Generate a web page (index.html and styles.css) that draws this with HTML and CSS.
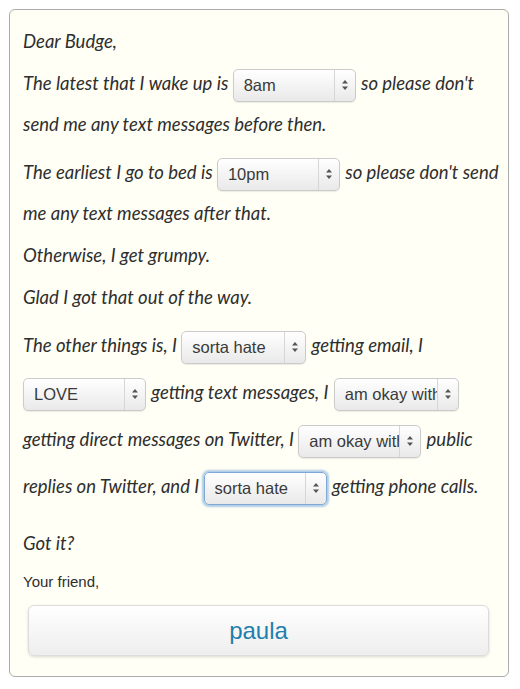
FILE: index.html
```html
<!DOCTYPE html>
<html>
<head>
<meta charset="utf-8">
<link rel="stylesheet" href="styles.css">
</head>
<body>
<div class="card">
  <p class="para"><span class="ln">Dear Budge,</span></p>
  <p class="para"><span class="ln">The latest that I wake up is <span class="sel"><span class="val">8am</span><span class="arr"><svg width="8" height="12" viewBox="0 0 8 12"><path d="M4 1L7 4.6H1Z M4 11L7 7.4H1Z" fill="#555"/></svg></span></span> so please don't</span><span class="ln">send me any text messages before then.</span></p>
  <p class="para"><span class="ln sr">The earliest I go to bed is <span class="sel"><span class="val">10pm</span><span class="arr"><svg width="8" height="12" viewBox="0 0 8 12"><path d="M4 1L7 4.6H1Z M4 11L7 7.4H1Z" fill="#555"/></svg></span></span> so please don't send</span><span class="ln">me any text messages after that.</span></p>
  <p class="para"><span class="ln">Otherwise, I get grumpy.</span></p>
  <p class="para"><span class="ln">Glad I got that out of the way.</span></p>
  <p class="para"><span class="ln sr">The other things is, I <span class="sel wide"><span class="val">sorta hate</span><span class="arr"><svg width="8" height="12" viewBox="0 0 8 12"><path d="M4 1L7 4.6H1Z M4 11L7 7.4H1Z" fill="#555"/></svg></span></span> getting email, I</span><span class="ln sr"><span class="sel"><span class="val">LOVE</span><span class="arr"><svg width="8" height="12" viewBox="0 0 8 12"><path d="M4 1L7 4.6H1Z M4 11L7 7.4H1Z" fill="#555"/></svg></span></span> getting text messages, I <span class="sel wide"><span class="val">am okay with</span><span class="arr"><svg width="8" height="12" viewBox="0 0 8 12"><path d="M4 1L7 4.6H1Z M4 11L7 7.4H1Z" fill="#555"/></svg></span></span></span><span class="ln sr">getting direct messages on Twitter, I <span class="sel"><span class="val">am okay with</span><span class="arr"><svg width="8" height="12" viewBox="0 0 8 12"><path d="M4 1L7 4.6H1Z M4 11L7 7.4H1Z" fill="#555"/></svg></span></span> public</span><span class="ln sr">replies on Twitter, and I <span class="sel focus"><span class="val">sorta hate</span><span class="arr"><svg width="8" height="12" viewBox="0 0 8 12"><path d="M4 1L7 4.6H1Z M4 11L7 7.4H1Z" fill="#555"/></svg></span></span> getting phone calls.</span></p>
  <p class="para gotit"><span class="ln">Got it?</span></p>
  <p class="sign">Your friend,</p>
  <div class="btn">paula</div>
</div>
</body>
</html>
```
FILE: styles.css
```css
html, body {
  margin: 0;
  padding: 0;
  background: #ffffff;
}
.card {
  box-sizing: border-box;
  width: 500px;
  height: 668px;
  margin: 9px 0 0 9px;
  padding: 11px 13px 0 13px;
  border: 1.5px solid #ababab;
  border-radius: 6px;
  background: #fffff6;
  font-family: "Lato", "Open Sans", sans-serif;
  font-style: italic;
  font-size: 18.5px;
  color: #2e2e2e;
}
.para {
  margin: 1px 0 0 0;
}
.para:first-child {
  margin-top: 0;
}
.ln {
  display: block;
  height: 41px;
  line-height: 41px;
  white-space: nowrap;
}
.ln.sr {
  padding-top: 6px;
}
.gotit {
  margin-top: 16px;
}
.sel {
  display: inline-flex;
  box-sizing: border-box;
  width: 123px;
  height: 33px;
  margin: 0 1px;
  vertical-align: middle;
  border: 1px solid #cbcbcb;
  border-radius: 5px;
  background: linear-gradient(#ffffff, #e9e9e9);
  box-shadow: 0 1px 1px rgba(0,0,0,0.08);
  font-family: "Liberation Sans", Arial, sans-serif;
  font-style: normal;
  font-size: 16.5px;
  color: #3a3a3a;
  line-height: 31px;
  overflow: hidden;
}
.ln > .sel:first-child {
  margin-left: 0;
}
.sel.wide {
  width: 125px;
}
.sel.focus {
  border-color: #7fa9d4;
  box-shadow: 0 0 2px 2px rgba(110,160,215,0.55);
}
.val {
  flex: 1;
  min-width: 0;
  padding-left: 10px;
  overflow: hidden;
  white-space: nowrap;
}
.arr {
  flex: none;
  width: 20px;
  border-left: 1px solid #d6d6d6;
  display: flex;
  align-items: center;
  justify-content: center;
}
.sign {
  margin: 8px 0 0 0;
  font-family: "Liberation Sans", Arial, sans-serif;
  font-style: normal;
  font-size: 15px;
  line-height: 20px;
  color: #2e2e2e;
}
.btn {
  box-sizing: border-box;
  width: 461px;
  height: 51px;
  margin: 13px 0 0 5px;
  border: 1px solid #dcdcdc;
  border-radius: 6px;
  background: linear-gradient(#ffffff, #eeeeee);
  box-shadow: 0 1px 3px rgba(0,0,0,0.15);
  font-family: "Liberation Sans", Arial, sans-serif;
  font-style: normal;
  font-size: 24px;
  color: #1e7fae;
  text-align: center;
  line-height: 49px;
}
```
